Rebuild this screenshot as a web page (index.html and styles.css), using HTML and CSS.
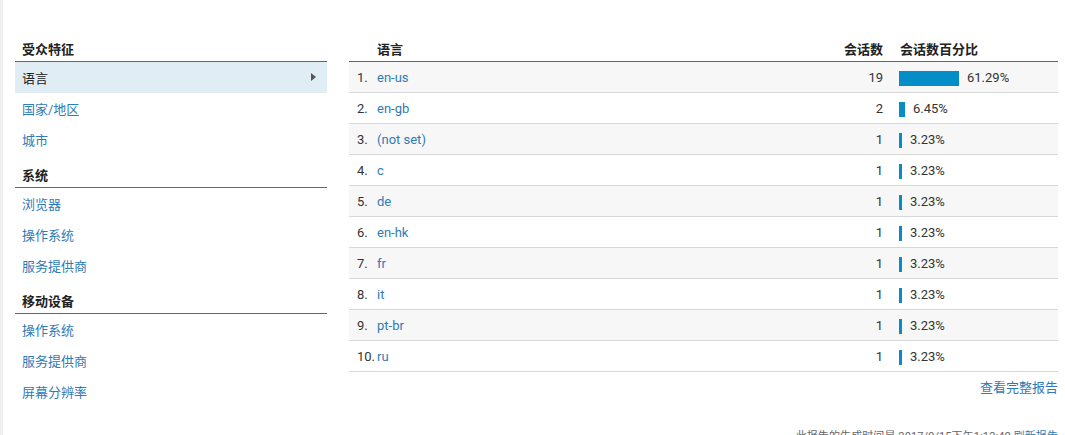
FILE: index.html
```html
<!DOCTYPE html>
<html lang="zh-CN">
<head>
<meta charset="utf-8">
<link rel="stylesheet" href="styles.css">
</head>
<body>
<div class="page">
  <div class="side">
    <div class="sec-head">受众特征</div>
    <div class="item selected">语言<span class="arrow"></span></div>
    <div class="item"><a>国家/地区</a></div>
    <div class="item"><a>城市</a></div>
    <div class="sec-head">系统</div>
    <div class="item"><a>浏览器</a></div>
    <div class="item"><a>操作系统</a></div>
    <div class="item"><a>服务提供商</a></div>
    <div class="sec-head">移动设备</div>
    <div class="item"><a>操作系统</a></div>
    <div class="item"><a>服务提供商</a></div>
    <div class="item"><a>屏幕分辨率</a></div>
  </div>
  <div class="main">
    <div class="table">
      <div class="row head">
        <div class="c-rank"></div>
        <div class="c-name">语言</div>
        <div class="c-count">会话数</div>
        <div class="c-pct">会话数百分比</div>
      </div>
      <div class="row odd"><div class="c-rank">1.</div><div class="c-name"><a>en-us</a></div><div class="c-count">19</div><div class="c-pct"><span class="bar" style="width:60px"></span><span class="pv">61.29%</span></div></div>
      <div class="row"><div class="c-rank">2.</div><div class="c-name"><a>en-gb</a></div><div class="c-count">2</div><div class="c-pct"><span class="bar" style="width:6px"></span><span class="pv">6.45%</span></div></div>
      <div class="row odd"><div class="c-rank">3.</div><div class="c-name"><a>(not set)</a></div><div class="c-count">1</div><div class="c-pct"><span class="bar" style="width:3px"></span><span class="pv">3.23%</span></div></div>
      <div class="row"><div class="c-rank">4.</div><div class="c-name"><a>c</a></div><div class="c-count">1</div><div class="c-pct"><span class="bar" style="width:3px"></span><span class="pv">3.23%</span></div></div>
      <div class="row odd"><div class="c-rank">5.</div><div class="c-name"><a>de</a></div><div class="c-count">1</div><div class="c-pct"><span class="bar" style="width:3px"></span><span class="pv">3.23%</span></div></div>
      <div class="row"><div class="c-rank">6.</div><div class="c-name"><a>en-hk</a></div><div class="c-count">1</div><div class="c-pct"><span class="bar" style="width:3px"></span><span class="pv">3.23%</span></div></div>
      <div class="row odd"><div class="c-rank">7.</div><div class="c-name"><a>fr</a></div><div class="c-count">1</div><div class="c-pct"><span class="bar" style="width:3px"></span><span class="pv">3.23%</span></div></div>
      <div class="row"><div class="c-rank">8.</div><div class="c-name"><a>it</a></div><div class="c-count">1</div><div class="c-pct"><span class="bar" style="width:3px"></span><span class="pv">3.23%</span></div></div>
      <div class="row odd"><div class="c-rank">9.</div><div class="c-name"><a>pt-br</a></div><div class="c-count">1</div><div class="c-pct"><span class="bar" style="width:3px"></span><span class="pv">3.23%</span></div></div>
      <div class="row"><div class="c-rank">10.</div><div class="c-name"><a>ru</a></div><div class="c-count">1</div><div class="c-pct"><span class="bar" style="width:3px"></span><span class="pv">3.23%</span></div></div>
    </div>
    <div class="full"><a>查看完整报告</a></div>
    <div class="foot">此报告的生成时间是 2017/9/15下午1:12:40 <a>刷新报告</a></div>
  </div>
</div>
</body>
</html>
```
FILE: styles.css
```css
html, body {
  margin: 0;
  padding: 0;
  background: #fff;
}
body {
  font-family: Roboto, "Noto Sans CJK SC", sans-serif;
  font-size: 13px;
  color: #333;
  border-left: 3px solid #f0f0f0;
  height: 435px;
  box-sizing: border-box;
  overflow: hidden;
}
a {
  color: #2f7bb5;
  text-decoration: none;
}
.page {
  display: flex;
  padding: 29px 0 0 12px;
}
.side {
  width: 312px;
  margin-right: 22px;
}
.sec-head {
  padding: 12px 7px 2px;
  line-height: 18px;
  font-weight: bold;
  color: #222;
  border-bottom: 1px solid #666;
}
.item {
  height: 29px;
  line-height: 29px;
  padding: 2px 7px 0;
  position: relative;
}
.item.selected {
  background: #e0edf5;
  color: #222;
}
.arrow {
  position: absolute;
  right: 11px;
  top: 11px;
  width: 0;
  height: 0;
  border-left: 5px solid #555;
  border-top: 4px solid transparent;
  border-bottom: 4px solid transparent;
}
.main {
  width: 709px;
}
.row {
  display: grid;
  grid-template-columns: 28px 1fr auto 175px;
  height: 28px;
  line-height: 28px;
  padding-top: 2px;
  border-bottom: 1px solid #d8d8d8;
}
.row.odd {
  background: #f7f7f7;
}
.row.head {
  line-height: 18px;
  padding-top: 12px;
  box-sizing: border-box;
  height: 33px;
  border-bottom: 1px solid #666;
  font-weight: bold;
  color: #222;
}
.c-rank {
  padding-left: 8px;
  color: #333;
}
.c-count {
  text-align: right;
}
.c-pct {
  padding-left: 16px;
  display: flex;
  align-items: center;
}
.row.head .c-pct {
  align-items: flex-start;
  padding-left: 17px;
}
.bar {
  display: inline-block;
  height: 15px;
  background: #058dc7;
  margin-right: 8px;
}
.pv {
  color: #333;
}
.full {
  text-align: right;
  line-height: 18px;
  margin-top: 7px;
}
.foot {
  text-align: right;
  font-size: 11px;
  line-height: 14px;
  color: #666;
  margin-top: 33px;
  letter-spacing: 0.1px;
}
```
